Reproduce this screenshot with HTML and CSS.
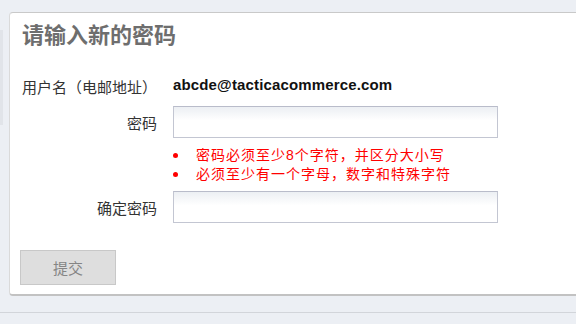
FILE: index.html
```html
<!DOCTYPE html>
<html lang="zh-CN">
<head>
<meta charset="utf-8">
<title>请输入新的密码</title>
<link rel="stylesheet" href="styles.css">
</head>
<body>
<div class="page">
  <div class="main">
    <div class="rail"></div>
    <div class="card">
      <h1 class="title">请输入新的密码</h1>
      <form class="form">
        <div class="row row-user">
          <label class="label">用户名（电邮地址）</label>
          <div class="email">abcde@tacticacommerce.com</div>
        </div>
        <div class="row row-pass">
          <label class="label">密码</label>
          <input class="input" type="password">
        </div>
        <div class="row row-errors">
          <span></span>
          <ul class="errors">
            <li>密码必须至少8个字符，并区分大小写</li>
            <li>必须至少有一个字母，数字和特殊字符</li>
          </ul>
        </div>
        <div class="row row-confirm">
          <label class="label">确定密码</label>
          <input class="input" type="password">
        </div>
        <div class="actions">
          <button class="btn" type="button">提交</button>
        </div>
      </form>
    </div>
  </div>
  <div class="footer-line"></div>
</div>
</body>
</html>
```

FILE: styles.css
```css
html, body {
  margin: 0;
  padding: 0;
}
body {
  background: #eceff4;
  font-family: "Liberation Sans", "Noto Sans CJK SC", sans-serif;
  color: #333;
  overflow: hidden;
  width: 576px;
  height: 324px;
}
.page {
  display: flex;
  flex-direction: column;
}
.main {
  display: flex;
  align-items: flex-start;
  padding-top: 12px;
}
.rail {
  width: 3px;
  height: 95px;
  margin-top: 18px;
  background: #e1e4e9;
  flex: none;
}
.card {
  flex: 1;
  min-width: 0;
  margin-left: 6px;
  background: #fff;
  border-top: 1px solid #c9c9c9;
  border-left: 1px solid #dadada;
  border-bottom: 2px solid #c2c2c2;
  border-radius: 4px 0 0 4px;
  padding: 11px 0 8px 12px;
  box-sizing: border-box;
  height: 284px;
}
.title {
  margin: 0;
  font-size: 22px;
  line-height: 24px;
  font-weight: bold;
  color: #6e6e6e;
}
.form {
  margin: 0;
}
.row {
  display: grid;
  grid-template-columns: 135px 325px;
  column-gap: 16px;
  align-items: center;
}
.label {
  text-align: right;
  font-size: 15px;
  color: #333;
  white-space: nowrap;
}
.row-user {
  margin-top: 28px;
  align-items: start;
}
.row-user .label {
  line-height: 24px;
  text-align: left;
}
.email {
  font-size: 15px;
  line-height: 16px;
  font-weight: bold;
  letter-spacing: 0.15px;
  color: #111;
  margin-top: 1px;
  white-space: nowrap;
}
.row-pass {
  margin-top: 6px;
}
.input {
  display: block;
  box-sizing: border-box;
  width: 325px;
  height: 32px;
  margin: 0;
  border: 1px solid #c3c6d2;
  border-top-color: #b9bcca;
  background: linear-gradient(#eceff3, #ffffff 45%);
  padding: 0 6px;
  font-size: 14px;
}
.row-errors {
  margin-top: 8px;
}
.errors {
  margin: 0;
  padding: 0;
  list-style: none;
  color: #ff0000;
  font-size: 14px;
  letter-spacing: 1px;
  line-height: 19px;
}
.errors li {
  position: relative;
  padding-left: 23px;
}
.errors li::before {
  content: "";
  position: absolute;
  left: 0;
  top: 7px;
  width: 5px;
  height: 5px;
  border-radius: 50%;
  background: #ff0000;
}
.row-confirm {
  margin-top: 7px;
}
.actions {
  margin-top: 27px;
}
.btn {
  display: block;
  margin-left: -2px;
  width: 96px;
  height: 35px;
  background: #dedede;
  border: 1px solid #c8c8c8;
  color: #858585;
  font-family: "Liberation Sans", "Noto Sans CJK SC", sans-serif;
  font-size: 15px;
  padding: 0;
}
.footer-line {
  margin-top: 16px;
  height: 1px;
  background: #d2d5da;
}
```
